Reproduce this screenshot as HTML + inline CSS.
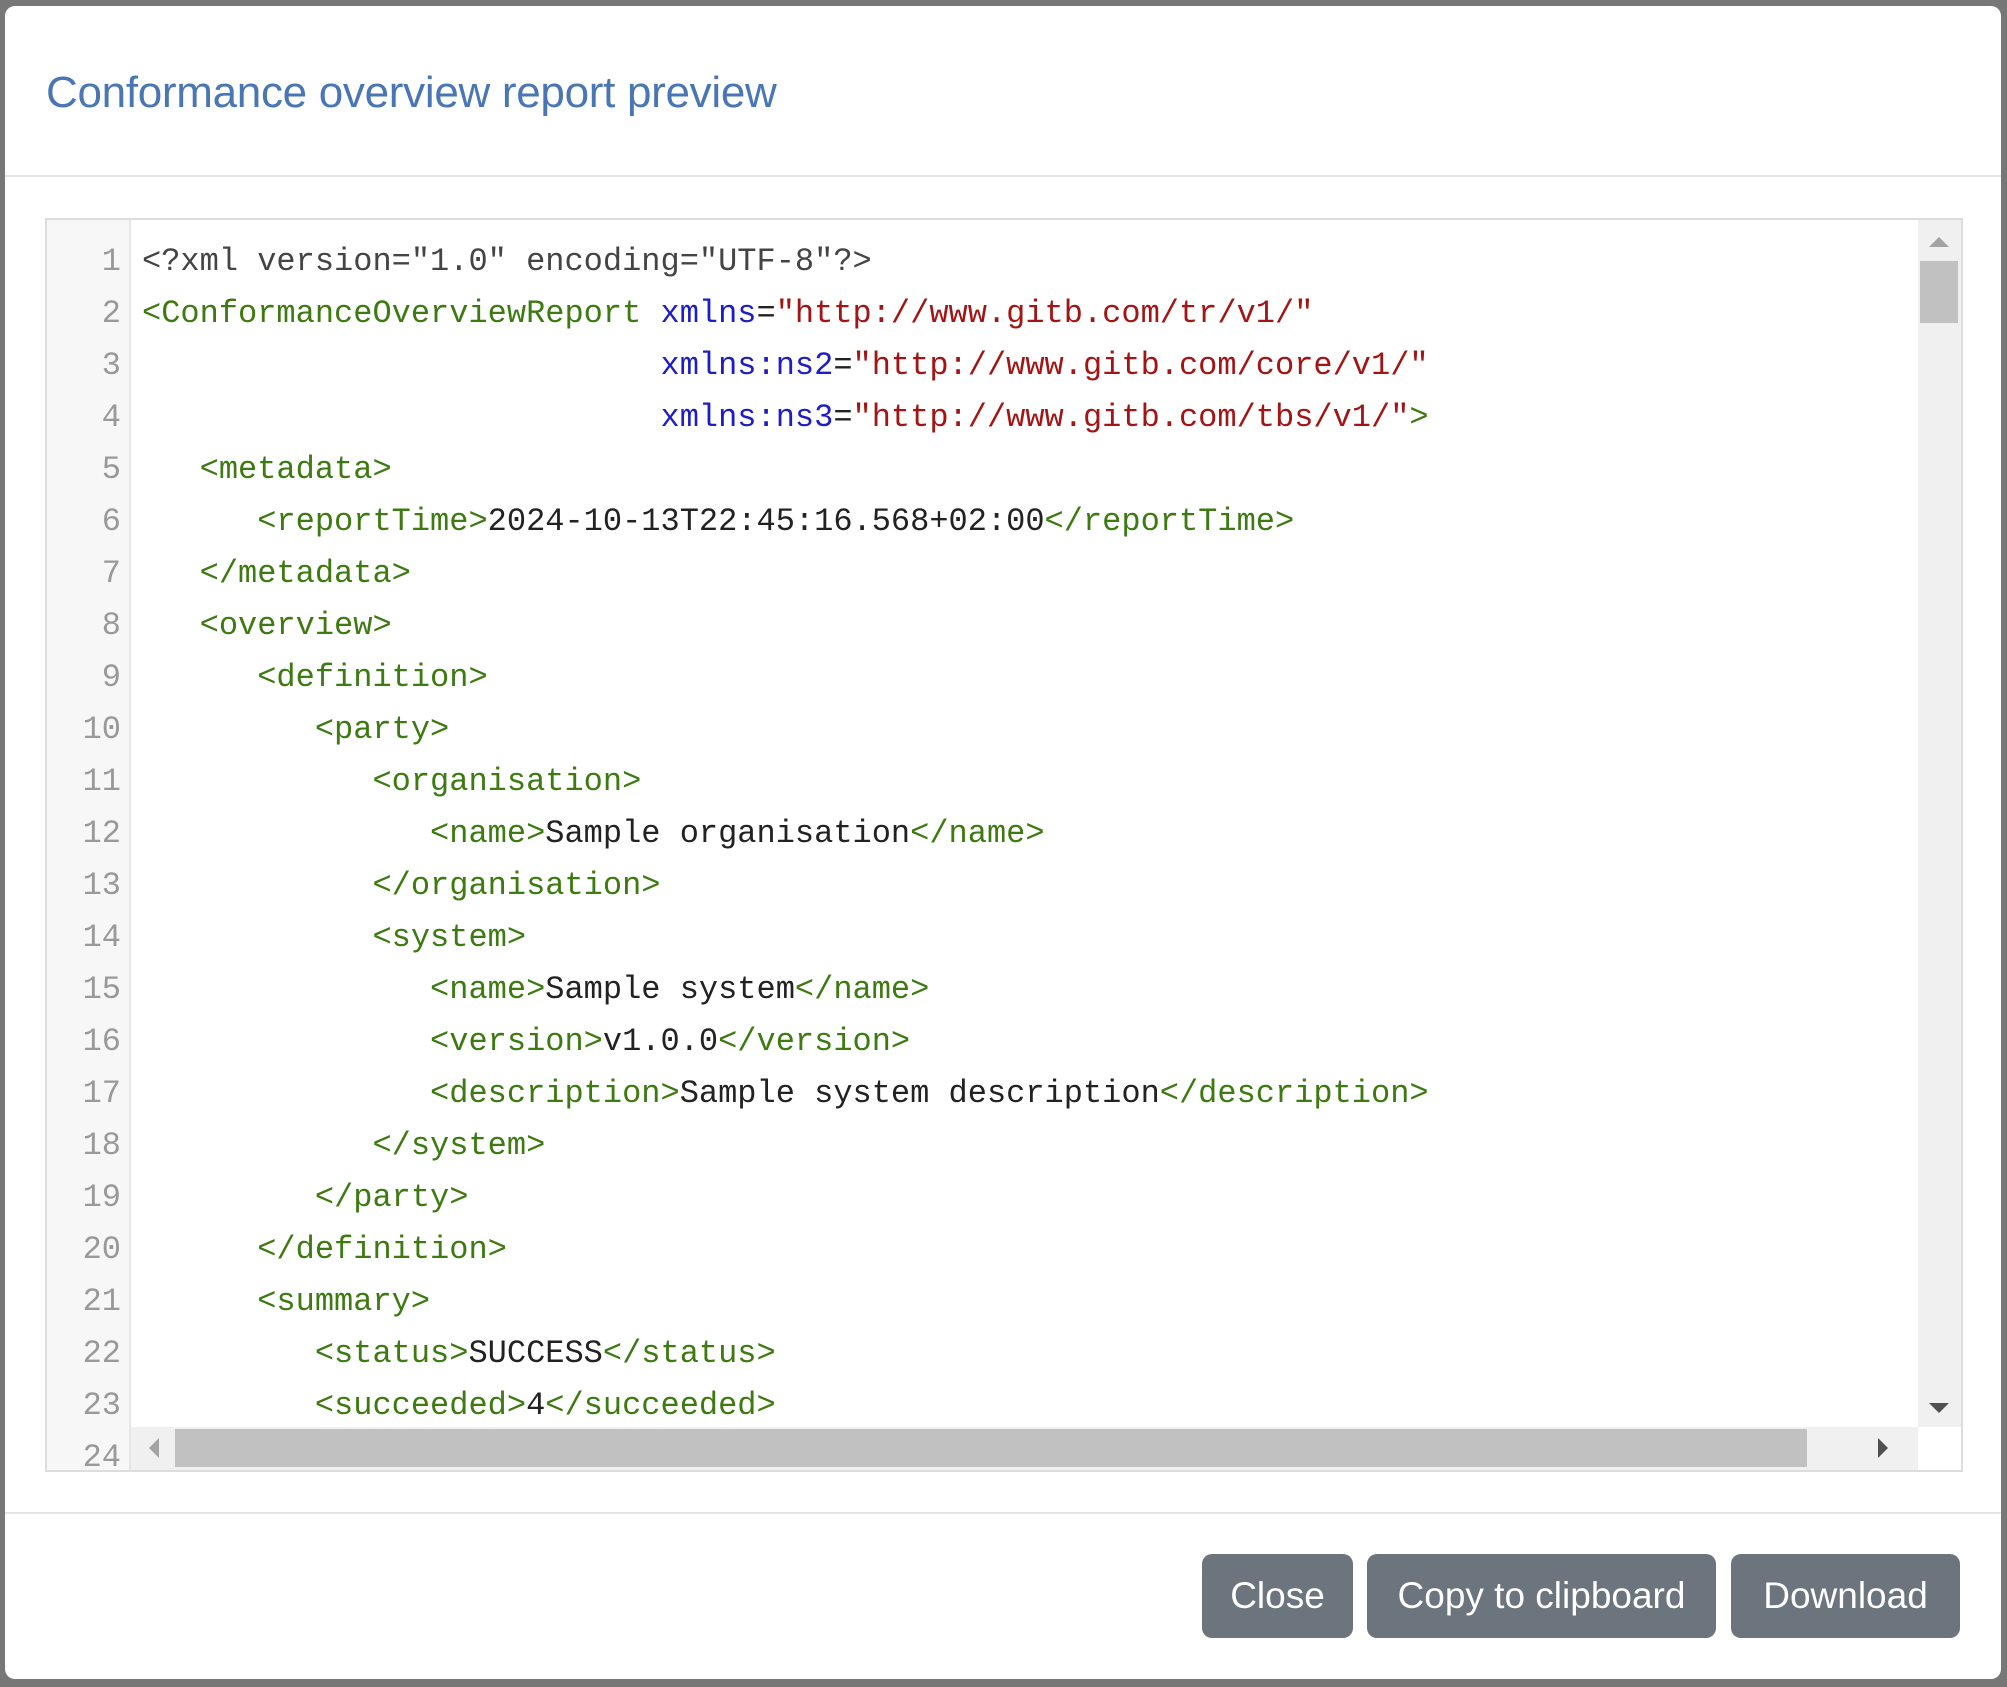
<!DOCTYPE html>
<html><head><meta charset="utf-8"><style>
html,body{margin:0;padding:0;}
body{width:2007px;height:1687px;background:#777;position:relative;overflow:hidden;font-family:"Liberation Sans",sans-serif;}
.modal{position:absolute;left:5px;top:6px;width:1996px;height:1673px;background:#fff;border-radius:10px;overflow:hidden;}
.title{position:absolute;left:41px;top:62px;font-size:44px;color:#4a76b5;letter-spacing:-0.3px;}
.hr1{position:absolute;left:0;right:0;top:169px;height:2px;background:#e3e6e9;}
.hr2{position:absolute;left:0;right:0;top:1506px;height:2px;background:#e3e6e9;}
.ed{position:absolute;left:40px;top:212px;width:1914px;height:1250px;border:2px solid #ddd;overflow:hidden;background:#fff;}
.gut{position:absolute;left:0;top:0;width:82px;height:100%;background:#f7f7f7;border-right:2px solid #e6e6e6;}
.ln{position:absolute;font-family:"Liberation Mono",monospace;font-size:32px;line-height:52px;white-space:pre;}
.num{left:0;width:74px;text-align:right;color:#999;}
.code{left:95px;color:#222;}
.t{color:#3e7a12}.a{color:#1d1dc8}.s{color:#a31515}.p{color:#444}
.vs{position:absolute;left:1871px;top:0;width:43px;height:1207px;background:#f0f0f0;}
.vth{position:absolute;left:2px;top:41px;width:38px;height:62px;background:#c1c1c1;}
.hs{position:absolute;left:84px;top:1207px;width:1787px;height:43px;background:#f0f0f0;}
.hth{position:absolute;left:44px;top:2px;width:1632px;height:38px;background:#c1c1c1;}
.btn{position:absolute;top:1548px;height:84px;background:#6c757d;color:#fff;border-radius:10px;font-size:37px;line-height:84px;text-align:center;}
</style></head><body>
<div class="modal">
<div class="title">Conformance overview report preview</div>
<div class="hr1"></div>
<div class="ed">
<div class="gut"></div>
<div id="lines"></div>
<div class="ln num" style="top:16px">1
2
3
4
5
6
7
8
9
10
11
12
13
14
15
16
17
18
19
20
21
22
23
24</div>
<div class="ln code" style="top:16px"><span class="p">&lt;?xml version="1.0" encoding="UTF-8"?&gt;</span>
<span class="t">&lt;ConformanceOverviewReport</span> <span class="a">xmlns</span>=<span class="s">"http://www.gitb.com/tr/v1/"</span>
                           <span class="a">xmlns:ns2</span>=<span class="s">"http://www.gitb.com/core/v1/"</span>
                           <span class="a">xmlns:ns3</span>=<span class="s">"http://www.gitb.com/tbs/v1/"</span><span class="t">&gt;</span>
   <span class="t">&lt;metadata&gt;</span>
      <span class="t">&lt;reportTime&gt;</span>2024-10-13T22:45:16.568+02:00<span class="t">&lt;/reportTime&gt;</span>
   <span class="t">&lt;/metadata&gt;</span>
   <span class="t">&lt;overview&gt;</span>
      <span class="t">&lt;definition&gt;</span>
         <span class="t">&lt;party&gt;</span>
            <span class="t">&lt;organisation&gt;</span>
               <span class="t">&lt;name&gt;</span>Sample organisation<span class="t">&lt;/name&gt;</span>
            <span class="t">&lt;/organisation&gt;</span>
            <span class="t">&lt;system&gt;</span>
               <span class="t">&lt;name&gt;</span>Sample system<span class="t">&lt;/name&gt;</span>
               <span class="t">&lt;version&gt;</span>v1.0.0<span class="t">&lt;/version&gt;</span>
               <span class="t">&lt;description&gt;</span>Sample system description<span class="t">&lt;/description&gt;</span>
            <span class="t">&lt;/system&gt;</span>
         <span class="t">&lt;/party&gt;</span>
      <span class="t">&lt;/definition&gt;</span>
      <span class="t">&lt;summary&gt;</span>
         <span class="t">&lt;status&gt;</span>SUCCESS<span class="t">&lt;/status&gt;</span>
         <span class="t">&lt;succeeded&gt;</span>4<span class="t">&lt;/succeeded&gt;</span>
         <span class="t">&lt;failed&gt;</span>0<span class="t">&lt;/failed&gt;</span></div>
<div class="vs"><div class="vth"></div>
<svg style="position:absolute;left:11px;top:16px" width="20" height="12"><path d="M0 11L10 1L20 11Z" fill="#a3a3a3"/></svg>
<svg style="position:absolute;left:11px;top:1182px" width="20" height="12"><path d="M0 1L10 11L20 1Z" fill="#505050"/></svg>
</div>
<div class="hs"><div class="hth"></div>
<svg style="position:absolute;left:17px;top:11px" width="12" height="20"><path d="M11 0L1 10L11 20Z" fill="#a3a3a3"/></svg>
<svg style="position:absolute;left:1746px;top:11px" width="12" height="20"><path d="M1 0L11 10L1 20Z" fill="#505050"/></svg>
</div>
<div style="position:absolute;left:1871px;top:1207px;width:43px;height:43px;background:#fff"></div>
</div>
<div class="hr2"></div>
<div class="btn" style="left:1197px;width:151px">Close</div>
<div class="btn" style="left:1362px;width:349px">Copy to clipboard</div>
<div class="btn" style="left:1726px;width:229px">Download</div>
</div>
</body></html>
